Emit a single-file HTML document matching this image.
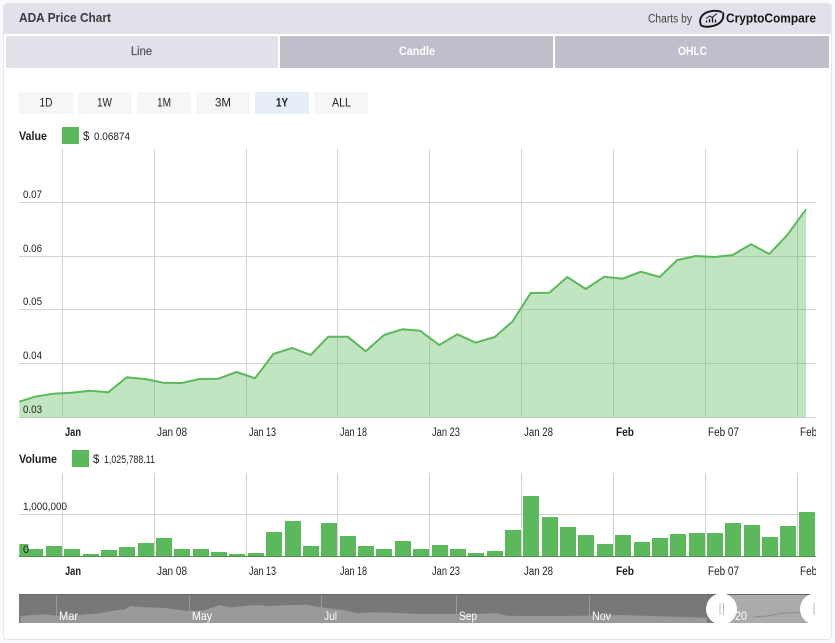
<!DOCTYPE html>
<html><head><meta charset="utf-8"><style>
html,body{margin:0;padding:0;width:835px;height:643px;overflow:hidden;background:#f8f9fc}
svg{display:block;font-family:"Liberation Sans",sans-serif}
text{fill:#222;font-size:11.5px}
.b{font-weight:bold}
.g{stroke:#d2d2d2;stroke-width:1;fill:none}
.n{fill:#fff;font-size:12px}
</style></head><body>
<svg width="835" height="643" viewBox="0 0 835 643" xmlns="http://www.w3.org/2000/svg">
<defs>
<clipPath id="c"><rect x="19" y="140" width="797" height="450"/></clipPath>
<clipPath id="nc"><rect x="19" y="594" width="797" height="29"/></clipPath>
</defs>
<rect x="3.5" y="3.5" width="828" height="636" rx="4" fill="#fff" stroke="#e6e7ed"/>
<path d="M4 34V7a3 3 0 0 1 3-3H828a3 3 0 0 1 3 3V34Z" fill="#e0e1e9"/>
<text x="19" y="22" class="b" style="font-size:12.5px;fill:#3a3a3f" textLength="92" lengthAdjust="spacingAndGlyphs">ADA Price Chart</text>
<text x="648" y="22.500" style="font-size:11.5px;fill:#444" textLength="44" lengthAdjust="spacingAndGlyphs">Charts by</text>
<g fill="none" stroke="#16161a">
<path d="M701.500 26C698.800 21.500 700 16 705.500 13C710.500 10.400 718 10 722 12.300" stroke-width="1.900"/>
<path d="M723 12.300C724 17 722.500 21.500 717.500 24.300C712.500 26.800 705.500 27.500 701.500 25.800" stroke-width="1.900"/>
<path d="M706.500 22.500v-2M709.500 22.500v-3.500M712.500 22.500v-5M715.500 22.500v-3" stroke-width="1.300"/>
<path d="M706 18.500l4-2.500 2 1.500 5-4" stroke-width="1"/>
</g>
<text x="726" y="22.500" class="b" style="font-size:13px;fill:#16161a" textLength="90" lengthAdjust="spacingAndGlyphs">CryptoCompare</text>
<rect x="6" y="36" width="272" height="32" fill="#e0e1e9"/>
<rect x="280" y="36" width="273" height="32" fill="#bfbfcb"/>
<rect x="555" y="36" width="274" height="32" fill="#bfbfcb"/>
<text x="131" y="55" style="font-size:11.5px;fill:#55555c;stroke:#55555c;stroke-width:.25" textLength="21" lengthAdjust="spacingAndGlyphs">Line</text>
<text x="399" y="55" class="b" style="fill:#fff" textLength="36" lengthAdjust="spacingAndGlyphs">Candle</text>
<text x="678" y="55" class="b" style="fill:#fff" textLength="29" lengthAdjust="spacingAndGlyphs">OHLC</text>
<g fill="#f6f6f6">
<rect x="19" y="92" width="54" height="22"/><rect x="78" y="92" width="54" height="22"/><rect x="137" y="92" width="54" height="22"/><rect x="196" y="92" width="54" height="22"/><rect x="255" y="92" width="54" height="22" fill="#e6eef7"/><rect x="314" y="92" width="54" height="22"/>
</g>
<text x="39.500" y="106.500" textLength="13" lengthAdjust="spacingAndGlyphs">1D</text>
<text x="97" y="106.500" textLength="15" lengthAdjust="spacingAndGlyphs">1W</text>
<text x="157" y="106.500" textLength="14" lengthAdjust="spacingAndGlyphs">1M</text>
<text x="215" y="106.500" textLength="16" lengthAdjust="spacingAndGlyphs">3M</text>
<text x="276" y="106.500" class="b" textLength="12" lengthAdjust="spacingAndGlyphs">1Y</text>
<text x="332" y="106.500" textLength="19" lengthAdjust="spacingAndGlyphs">ALL</text>
<text x="19" y="140" class="b" textLength="28" lengthAdjust="spacingAndGlyphs">Value</text>
<rect x="62" y="127" width="17" height="17" fill="#5cb85c"/>
<text x="83" y="140">$</text>
<text x="94" y="140" style="font-size:11px" textLength="36" lengthAdjust="spacingAndGlyphs">0.06874</text>
<!-- price grid -->
<path class="g" d="M62.500 149V418M154.500 149V418M246.500 149V418M337.500 149V418M429.500 149V418M521.500 149V418M613.500 149V418M705.500 149V418M797.500 149V418"/>
<path class="g" d="M19 202.500H816M19 256.500H816M19 309.500H816M19 363.500H816M19 417.500H816"/>
<path fill="#5cb85c" fill-opacity=".38" d="M19.300 401.700L35 396.700 53.300 393.700 71.700 392.700 90 390.700 108.300 392.300 126.700 377.300 145 379 163.300 382.700 181.700 383 200 379 218.300 378.700 236.700 372 255 378.300 273.300 354 292.300 348 310.700 355 328.300 336.700 347.700 336.700 365.700 351.300 384 335 402.300 329.300 420 330.700 439.300 345 457.300 334.300 475.700 342.700 494.700 337 512.300 321.700 530.700 293 549.300 292.700 567.300 277 585.700 289 604.300 276.700 622.700 278.700 641 271.700 659.700 277 677.300 260 695.700 256 714.300 257 732.700 255 751 244.300 769.300 254 787 235.300 806 209.300V417.500H19.300Z"/>
<path fill="none" stroke="#5cb85c" stroke-width="2" stroke-linejoin="round" d="M19.300 401.700L35 396.700 53.300 393.700 71.700 392.700 90 390.700 108.300 392.300 126.700 377.300 145 379 163.300 382.700 181.700 383 200 379 218.300 378.700 236.700 372 255 378.300 273.300 354 292.300 348 310.700 355 328.300 336.700 347.700 336.700 365.700 351.300 384 335 402.300 329.300 420 330.700 439.300 345 457.300 334.300 475.700 342.700 494.700 337 512.300 321.700 530.700 293 549.300 292.700 567.300 277 585.700 289 604.300 276.700 622.700 278.700 641 271.700 659.700 277 677.300 260 695.700 256 714.300 257 732.700 255 751 244.300 769.300 254 787 235.300 806 209.300"/>
<g>
<text x="23" y="198" style="font-size:11px" textLength="19" lengthAdjust="spacingAndGlyphs">0.07</text>
<text x="23" y="252" style="font-size:11px" textLength="19" lengthAdjust="spacingAndGlyphs">0.06</text>
<text x="23" y="305" style="font-size:11px" textLength="19" lengthAdjust="spacingAndGlyphs">0.05</text>
<text x="23" y="359" style="font-size:11px" textLength="19" lengthAdjust="spacingAndGlyphs">0.04</text>
<text x="23" y="413" style="font-size:11px" textLength="19" lengthAdjust="spacingAndGlyphs">0.03</text>
</g>
<g clip-path="url(#c)">
<text x="65" y="436" class="b" textLength="16" lengthAdjust="spacingAndGlyphs">Jan</text>
<text x="157" y="436" textLength="30" lengthAdjust="spacingAndGlyphs">Jan 08</text>
<text x="249" y="436" textLength="27" lengthAdjust="spacingAndGlyphs">Jan 13</text>
<text x="340" y="436" textLength="27" lengthAdjust="spacingAndGlyphs">Jan 18</text>
<text x="432" y="436" textLength="28" lengthAdjust="spacingAndGlyphs">Jan 23</text>
<text x="524" y="436" textLength="29" lengthAdjust="spacingAndGlyphs">Jan 28</text>
<text x="616" y="436" class="b" textLength="18" lengthAdjust="spacingAndGlyphs">Feb</text>
<text x="708" y="436" textLength="31" lengthAdjust="spacingAndGlyphs">Feb 07</text>
<text x="800" y="436" textLength="31" lengthAdjust="spacingAndGlyphs">Feb 12</text>
<text x="65" y="575" class="b" textLength="16" lengthAdjust="spacingAndGlyphs">Jan</text>
<text x="157" y="575" textLength="30" lengthAdjust="spacingAndGlyphs">Jan 08</text>
<text x="249" y="575" textLength="27" lengthAdjust="spacingAndGlyphs">Jan 13</text>
<text x="340" y="575" textLength="27" lengthAdjust="spacingAndGlyphs">Jan 18</text>
<text x="432" y="575" textLength="28" lengthAdjust="spacingAndGlyphs">Jan 23</text>
<text x="524" y="575" textLength="29" lengthAdjust="spacingAndGlyphs">Jan 28</text>
<text x="616" y="575" class="b" textLength="18" lengthAdjust="spacingAndGlyphs">Feb</text>
<text x="708" y="575" textLength="31" lengthAdjust="spacingAndGlyphs">Feb 07</text>
<text x="800" y="575" textLength="31" lengthAdjust="spacingAndGlyphs">Feb 12</text>
</g>
<!-- volume -->
<text x="19" y="463" class="b" textLength="38" lengthAdjust="spacingAndGlyphs">Volume</text>
<rect x="72" y="450" width="17" height="17" fill="#5cb85c"/>
<text x="93" y="463">$</text>
<text x="104" y="463" style="font-size:11px" textLength="51" lengthAdjust="spacingAndGlyphs">1,025,788.11</text>
<path class="g" d="M62.500 473V557M154.500 473V557M246.500 473V557M337.500 473V557M429.500 473V557M521.500 473V557M613.500 473V557M705.500 473V557M797.500 473V557"/>
<path class="g" d="M19 514.500H816"/>
<g fill="#5cb85c">
<rect x="19.300" y="544" width="9" height="13"/>
<rect x="27" y="549" width="16" height="8"/><rect x="46" y="546" width="16" height="11"/><rect x="64" y="549" width="16" height="8"/><rect x="83" y="554" width="16" height="3"/><rect x="101" y="550" width="16" height="7"/><rect x="119" y="547" width="16" height="10"/><rect x="138" y="543" width="16" height="14"/><rect x="156" y="538" width="16" height="19"/><rect x="174" y="549" width="16" height="8"/><rect x="193" y="549" width="16" height="8"/><rect x="211" y="552" width="16" height="5"/><rect x="229" y="554" width="16" height="3"/><rect x="248" y="553" width="16" height="4"/><rect x="266" y="532" width="16" height="25"/><rect x="285" y="521" width="16" height="36"/><rect x="303" y="546" width="16" height="11"/><rect x="321" y="523" width="16" height="34"/><rect x="340" y="536" width="16" height="21"/><rect x="358" y="546" width="16" height="11"/><rect x="376" y="549" width="16" height="8"/><rect x="395" y="541" width="16" height="16"/><rect x="413" y="549" width="16" height="8"/>
<rect x="432" y="545" width="16" height="12"/><rect x="450" y="549" width="16" height="8"/><rect x="468" y="553" width="16" height="4"/><rect x="487" y="551" width="16" height="6"/><rect x="505" y="530" width="16" height="27"/><rect x="523" y="496" width="16" height="61"/><rect x="542" y="517" width="16" height="40"/><rect x="560" y="527" width="16" height="30"/><rect x="578" y="535" width="16" height="22"/><rect x="597" y="544" width="16" height="13"/><rect x="615" y="535" width="16" height="22"/><rect x="634" y="542" width="16" height="15"/><rect x="652" y="538" width="16" height="19"/><rect x="670" y="534" width="16" height="23"/><rect x="689" y="533" width="16" height="24"/><rect x="707" y="533" width="16" height="24"/><rect x="725" y="523" width="16" height="34"/><rect x="744" y="525" width="16" height="32"/><rect x="762" y="537" width="16" height="20"/><rect x="780" y="526" width="16" height="31"/><rect x="799" y="512" width="16" height="45"/>
</g>
<path d="M19 556.500H816" stroke="#4b8f4b" stroke-width="1"/>
<text x="23" y="510" style="font-size:11px" textLength="44" lengthAdjust="spacingAndGlyphs">1,000,000</text>
<text x="23" y="553" style="font-size:11px">0</text>
<!-- navigator -->
<rect x="19" y="594" width="797" height="29" fill="#787878"/>
<rect x="19" y="594" width="797" height="1" fill="#666"/>
<rect x="722" y="595" width="94" height="28" fill="#ababab"/>
<path fill="#999" d="M20.700 623V616L33 615 45 614.300 57 615.700 80 615 100 613.300 113 610.700 125 609.300 130 606 147 607.300 167 608.300 187 611 203 610.700 220 605 230 607.300 247 605.700 260 605 267 606.300 283 605.300 307 604.700 320 607.300 343 610 357 613.300 373 612.300 393 612.700 420 614 453 614 473 614 497 613.300 507 615.700 533 616 587 615.700 620 615 653 616 707 617.700V623Z"/>
<path fill="none" stroke="#8c8c8c" stroke-width="1" d="M753 617L767 616 783 613.300 800 612.300 815 610"/>
<path stroke="#999" stroke-width="1" fill="none" d="M56.500 595V623M189.500 595V623M321.500 595V623M456.500 595V623M589.500 595V623"/>
<text x="59" y="620" class="n" textLength="19" lengthAdjust="spacingAndGlyphs">Mar</text>
<text x="192" y="620" class="n" textLength="20" lengthAdjust="spacingAndGlyphs">May</text>
<text x="324" y="620" class="n" textLength="13" lengthAdjust="spacingAndGlyphs">Jul</text>
<text x="459" y="620" class="n" textLength="18" lengthAdjust="spacingAndGlyphs">Sep</text>
<text x="592" y="620" class="n" textLength="19" lengthAdjust="spacingAndGlyphs">Nov</text>
<text x="735" y="620" class="n" textLength="12" lengthAdjust="spacingAndGlyphs">20</text>
<g clip-path="url(#nc)">
<circle cx="721.500" cy="609" r="15.500" fill="#fff"/>
<circle cx="815.500" cy="609" r="15.500" fill="#fff"/>
<path d="M720 603V615M723.500 603V615" stroke="#bbb" stroke-width="1"/>
<path d="M814 603V615" stroke="#bbb" stroke-width="1"/>
</g>
</svg>
</body></html>
